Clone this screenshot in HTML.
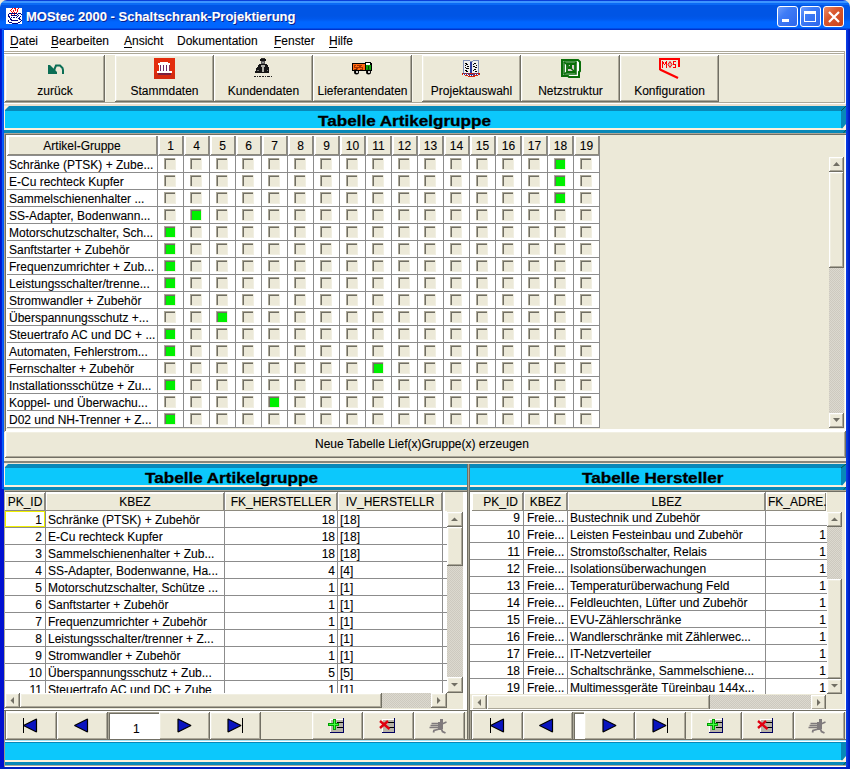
<!DOCTYPE html><html><head><meta charset="utf-8"><style>
*{margin:0;padding:0;box-sizing:border-box}
html,body{width:850px;height:769px;overflow:hidden;background:#ece9d8;position:relative;font-family:"Liberation Sans",sans-serif;font-size:12px;color:#000}
div,span{position:absolute}
.t{white-space:nowrap;line-height:14px;-webkit-text-stroke-width:0.1px}
.raised{background:#ece9d8;box-shadow:inset -1px -1px #716f64,inset 1px 1px #fff,inset -2px -2px #aca899,inset 2px 2px #f1efe2}
.hdr{background:#ece9d8;box-shadow:inset -1px -1px #8d8a7e,inset 1px 1px #fff}
.cb{width:13px;height:13px;background:#ece9d8;box-shadow:inset -1px -1px #fff,inset -2px -2px #f1efe2,inset 1px 1px #aca899,inset 2px 2px #716f64}
.cb.on::after{content:"";position:absolute;left:2px;top:2px;width:9px;height:9px;background:#00f000}
.cyan{background:#0cc8fc}
.sb{background:#ece9d8;box-shadow:inset -1px -1px #716f64,inset 1px 1px #fff,inset -2px -2px #aca899,inset 2px 2px #f1efe2}
.track{background-color:#d4d0c6;background-image:repeating-conic-gradient(#cdc9bf 0 25%, #dcd9cf 0 50%);background-size:2px 2px}
</style></head><body><div style="left:0px;top:0px;width:850px;height:30px;background:linear-gradient(to bottom,#0a3fd8 0,#0a3fd8 1px,#3d95ff 1px,#3d95ff 3px,#0a6af5 3px,#0a6af5 5px,#0055e5 5px,#0055e5 16px,#0058ec 19px,#0066ff 22px,#0066ff 28px,#0033cc 29px,#0033cc 30px);border-radius:7px 7px 0 0"></div>
<svg style="position:absolute;left:6px;top:8px" width="16" height="16" viewBox="0 0 16 16" shape-rendering="crispEdges"><rect width="16" height="16" fill="#fff"/><rect x="6" y="0" width="1" height="1" fill="#f00"/><rect x="8" y="0" width="1" height="1" fill="#f00"/><rect x="9" y="0" width="1" height="1" fill="#f00"/><rect x="12" y="0" width="1" height="1" fill="#f00"/><rect x="5" y="1" width="1" height="1" fill="#f00"/><rect x="9" y="1" width="1" height="1" fill="#f00"/><rect x="11" y="1" width="1" height="1" fill="#f00"/><rect x="4" y="2" width="1" height="1" fill="#f00"/><rect x="7" y="2" width="1" height="1" fill="#f00"/><rect x="9" y="2" width="1" height="1" fill="#f00"/><rect x="11" y="2" width="1" height="1" fill="#f00"/><rect x="5" y="3" width="1" height="1" fill="#f00"/><rect x="7" y="3" width="1" height="1" fill="#f00"/><rect x="11" y="3" width="1" height="1" fill="#f00"/><rect x="6" y="4" width="1" height="1" fill="#f00"/><rect x="8" y="4" width="1" height="1" fill="#f00"/><rect x="10" y="4" width="1" height="1" fill="#f00"/><rect x="3" y="5" width="1" height="1" fill="#000080"/><rect x="4" y="5" width="1" height="1" fill="#000080"/><rect x="5" y="5" width="1" height="1" fill="#000080"/><rect x="6" y="5" width="1" height="1" fill="#000080"/><rect x="7" y="5" width="1" height="1" fill="#000080"/><rect x="8" y="5" width="1" height="1" fill="#000080"/><rect x="9" y="5" width="1" height="1" fill="#000080"/><rect x="10" y="5" width="1" height="1" fill="#000080"/><rect x="12" y="5" width="1" height="1" fill="#000080"/><rect x="13" y="5" width="1" height="1" fill="#000080"/><rect x="14" y="5" width="1" height="1" fill="#000080"/><rect x="2" y="6" width="1" height="1" fill="#000080"/><rect x="5" y="6" width="1" height="1" fill="#f00"/><rect x="8" y="6" width="1" height="1" fill="#f00"/><rect x="11" y="6" width="1" height="1" fill="#000080"/><rect x="15" y="6" width="1" height="1" fill="#000080"/><rect x="2" y="7" width="1" height="1" fill="#000080"/><rect x="5" y="7" width="1" height="1" fill="#000080"/><rect x="6" y="7" width="1" height="1" fill="#000080"/><rect x="7" y="7" width="1" height="1" fill="#000080"/><rect x="8" y="7" width="1" height="1" fill="#000080"/><rect x="9" y="7" width="1" height="1" fill="#000080"/><rect x="10" y="7" width="1" height="1" fill="#000080"/><rect x="12" y="7" width="1" height="1" fill="#000080"/><rect x="2" y="8" width="1" height="1" fill="#000080"/><rect x="3" y="8" width="1" height="1" fill="#000080"/><rect x="11" y="8" width="1" height="1" fill="#000080"/><rect x="14" y="8" width="1" height="1" fill="#000080"/><rect x="3" y="9" width="1" height="1" fill="#000080"/><rect x="5" y="9" width="1" height="1" fill="#000080"/><rect x="7" y="9" width="1" height="1" fill="#000080"/><rect x="8" y="9" width="1" height="1" fill="#000080"/><rect x="10" y="9" width="1" height="1" fill="#000080"/><rect x="13" y="9" width="1" height="1" fill="#000080"/><rect x="4" y="10" width="1" height="1" fill="#000080"/><rect x="12" y="10" width="1" height="1" fill="#000080"/><rect x="13" y="10" width="1" height="1" fill="#000080"/><rect x="4" y="11" width="1" height="1" fill="#000080"/><rect x="5" y="11" width="1" height="1" fill="#000080"/><rect x="13" y="11" width="1" height="1" fill="#000080"/><rect x="14" y="11" width="1" height="1" fill="#000080"/><rect x="2" y="12" width="1" height="1" fill="#000080"/><rect x="5" y="12" width="1" height="1" fill="#000080"/><rect x="6" y="12" width="1" height="1" fill="#000080"/><rect x="7" y="12" width="1" height="1" fill="#000080"/><rect x="8" y="12" width="1" height="1" fill="#000080"/><rect x="9" y="12" width="1" height="1" fill="#000080"/><rect x="10" y="12" width="1" height="1" fill="#000080"/><rect x="11" y="12" width="1" height="1" fill="#000080"/><rect x="15" y="12" width="1" height="1" fill="#000080"/><rect x="2" y="13" width="1" height="1" fill="#000080"/><rect x="14" y="13" width="1" height="1" fill="#000080"/><rect x="3" y="14" width="1" height="1" fill="#000080"/><rect x="4" y="14" width="1" height="1" fill="#000080"/><rect x="5" y="14" width="1" height="1" fill="#000080"/><rect x="12" y="14" width="1" height="1" fill="#000080"/><rect x="13" y="14" width="1" height="1" fill="#000080"/><rect x="6" y="15" width="1" height="1" fill="#000080"/><rect x="7" y="15" width="1" height="1" fill="#000080"/><rect x="8" y="15" width="1" height="1" fill="#000080"/><rect x="9" y="15" width="1" height="1" fill="#000080"/><rect x="10" y="15" width="1" height="1" fill="#000080"/><rect x="11" y="15" width="1" height="1" fill="#000080"/></svg>
<span class="t" style="left:26px;top:9px;color:#fff;font-weight:bold;font-size:13px;line-height:16px;text-shadow:1px 1px #0a1e8a">MOStec 2000 - Schaltschrank-Projektierung</span>
<div style="left:777px;top:6px;width:21px;height:21px;background:linear-gradient(135deg,#6f9cfb 0,#3f7cf6 35%,#2d66ec 100%);border:1px solid #fff;border-radius:3px"><div style="left:4px;top:12px;width:7px;height:3px;background:#fff"></div></div>
<div style="left:800px;top:6px;width:21px;height:21px;background:linear-gradient(135deg,#6f9cfb 0,#3f7cf6 35%,#2d66ec 100%);border:1px solid #fff;border-radius:3px"><div style="left:3px;top:4px;width:12px;height:11px;border:1px solid #fff;border-top-width:3px"></div></div>
<div style="left:823px;top:6px;width:21px;height:21px;background:linear-gradient(135deg,#ea8a66 0,#d9582e 40%,#c8431c 100%);border:1px solid #fff;border-radius:3px"><svg style="position:absolute;left:3px;top:3px" width="14" height="14"><path d="M2 2l10 10M12 2l-10 10" stroke="#fff" stroke-width="2.2"/></svg></div>
<div style="left:0px;top:29px;width:4px;height:460px;background:linear-gradient(to right,#0010c8 0,#0020d8 2px,#0860ff 2px,#0050f0 4px)"></div>
<div style="left:0px;top:489px;width:4px;height:280px;background:#0010d0"></div>
<div style="left:846px;top:29px;width:4px;height:740px;background:linear-gradient(to right,#0a3ce6 0,#0a3ce6 1px,#0028d0 2px,#0018b8 4px)"></div>
<div style="left:0px;top:767px;width:850px;height:2px;background:#0020c0"></div>
<div style="left:4px;top:30px;width:842px;height:21px;background:#fff"></div>
<span class="t" style="left:10px;top:34px;line-height:14px">Datei</span>
<div style="left:10px;top:47px;width:8px;height:1px;background:#000"></div>
<span class="t" style="left:51px;top:34px;line-height:14px">Bearbeiten</span>
<div style="left:51px;top:47px;width:7px;height:1px;background:#000"></div>
<span class="t" style="left:124px;top:34px;line-height:14px">Ansicht</span>
<div style="left:124px;top:47px;width:8px;height:1px;background:#000"></div>
<span class="t" style="left:177px;top:34px;line-height:14px">Dokumentation</span>
<span class="t" style="left:274px;top:34px;line-height:14px">Fenster</span>
<div style="left:274px;top:47px;width:7px;height:1px;background:#000"></div>
<span class="t" style="left:329px;top:34px;line-height:14px">Hilfe</span>
<div style="left:329px;top:47px;width:8px;height:1px;background:#000"></div>
<div style="left:4px;top:51px;width:842px;height:1px;background:#aca899"></div>
<div style="left:4px;top:52px;width:842px;height:1px;background:#fff"></div>
<div style="left:4px;top:53px;width:842px;height:1px;background:#aca899"></div>
<div style="left:4px;top:54px;width:842px;height:48px;background:#ece9d8"></div>
<div style="left:4px;top:54px;width:840px;height:1px;background:#fff"></div>
<div class="raised" style="left:5px;top:55px;width:100px;height:47px;"></div>
<span class="t" style="left:5px;top:84px;width:100px;text-align:center">zurück</span>
<div class="raised" style="left:115px;top:55px;width:99px;height:47px;"></div>
<span class="t" style="left:115px;top:84px;width:99px;text-align:center">Stammdaten</span>
<div class="raised" style="left:214px;top:55px;width:99px;height:47px;"></div>
<span class="t" style="left:214px;top:84px;width:99px;text-align:center">Kundendaten</span>
<div class="raised" style="left:313px;top:55px;width:99px;height:47px;"></div>
<span class="t" style="left:313px;top:84px;width:99px;text-align:center">Lieferantendaten</span>
<div class="raised" style="left:422px;top:55px;width:99px;height:47px;"></div>
<span class="t" style="left:422px;top:84px;width:99px;text-align:center">Projektauswahl</span>
<div class="raised" style="left:521px;top:55px;width:99px;height:47px;"></div>
<span class="t" style="left:521px;top:84px;width:99px;text-align:center">Netzstruktur</span>
<div class="raised" style="left:620px;top:55px;width:99px;height:47px;"></div>
<span class="t" style="left:620px;top:84px;width:99px;text-align:center">Konfiguration</span>
<div style="left:105px;top:55px;width:10px;height:47px;background:#ece9d8;box-shadow:inset 1px 0 #f7f5ea"></div>
<div style="left:412px;top:55px;width:10px;height:47px;background:#ece9d8;box-shadow:inset 1px 0 #f7f5ea"></div>
<div style="left:844px;top:51px;width:1px;height:52px;background:#aca899"></div>
<div style="left:845px;top:51px;width:1px;height:53px;background:#fff"></div>
<div style="left:4px;top:102px;width:841px;height:1px;background:#aca899"></div>
<div style="left:4px;top:103px;width:842px;height:1px;background:#fff"></div>
<div style="left:4px;top:104px;width:842px;height:2px;background:#ebe0cf"></div>
<div style="left:4px;top:106px;width:842px;height:24px;background:#0cc8fc;border-top:5px solid #0888b8;border-right:5px solid #0888b8;border-left:1px solid #fdf0dc;border-bottom:2px solid #fdf0dc"></div>
<svg style="position:absolute;left:4px;top:106px" width="6" height="6"><path d="M0 0H5L0 5Z" fill="#fdf0dc"/></svg>
<div style="left:4px;top:130px;width:842px;height:3px;background:#0888b8"></div>
<svg style="position:absolute;left:841px;top:106px" width="5" height="27"><path d="M0 5L5 0" stroke="#0a5a48" stroke-width="1"/><path d="M5 18V24H0Z" fill="#fdf0dc"/><path d="M2.5 27L5 24" stroke="#0a5a48" stroke-width="1"/></svg>
<span class="t" style="left:318px;top:111px;font-weight:bold;font-size:15px;line-height:20px;-webkit-text-stroke:0.3px #000;transform:scaleX(1.14);transform-origin:0 0">Tabelle Artikelgruppe</span>
<div style="left:4px;top:133px;width:842px;height:299px;background:#ece9d8;box-shadow:inset 1px 1px #aca899,inset 2px 2px #716f64,inset -1px -1px #fff,inset -2px -2px #f1efe2"></div>
<div style="left:6px;top:135px;width:594px;height:293px;background:#fff"></div>
<div style="left:6px;top:429px;width:839px;height:2px;background:#fff"></div>
<div class="hdr" style="left:8px;top:136px;width:149px;height:19px;"></div>
<span class="t" style="left:7px;top:139px;width:150px;text-align:center">Artikel-Gruppe</span>
<div class="hdr" style="left:159px;top:136px;width:24px;height:19px;"></div>
<span class="t" style="left:158px;top:139px;width:25px;text-align:center">1</span>
<div class="hdr" style="left:185px;top:136px;width:24px;height:19px;"></div>
<span class="t" style="left:184px;top:139px;width:25px;text-align:center">4</span>
<div class="hdr" style="left:211px;top:136px;width:24px;height:19px;"></div>
<span class="t" style="left:210px;top:139px;width:25px;text-align:center">5</span>
<div class="hdr" style="left:237px;top:136px;width:24px;height:19px;"></div>
<span class="t" style="left:236px;top:139px;width:25px;text-align:center">6</span>
<div class="hdr" style="left:263px;top:136px;width:24px;height:19px;"></div>
<span class="t" style="left:262px;top:139px;width:25px;text-align:center">7</span>
<div class="hdr" style="left:289px;top:136px;width:24px;height:19px;"></div>
<span class="t" style="left:288px;top:139px;width:25px;text-align:center">8</span>
<div class="hdr" style="left:315px;top:136px;width:24px;height:19px;"></div>
<span class="t" style="left:314px;top:139px;width:25px;text-align:center">9</span>
<div class="hdr" style="left:341px;top:136px;width:24px;height:19px;"></div>
<span class="t" style="left:340px;top:139px;width:25px;text-align:center">10</span>
<div class="hdr" style="left:367px;top:136px;width:24px;height:19px;"></div>
<span class="t" style="left:366px;top:139px;width:25px;text-align:center">11</span>
<div class="hdr" style="left:393px;top:136px;width:24px;height:19px;"></div>
<span class="t" style="left:392px;top:139px;width:25px;text-align:center">12</span>
<div class="hdr" style="left:419px;top:136px;width:24px;height:19px;"></div>
<span class="t" style="left:418px;top:139px;width:25px;text-align:center">13</span>
<div class="hdr" style="left:445px;top:136px;width:24px;height:19px;"></div>
<span class="t" style="left:444px;top:139px;width:25px;text-align:center">14</span>
<div class="hdr" style="left:471px;top:136px;width:24px;height:19px;"></div>
<span class="t" style="left:470px;top:139px;width:25px;text-align:center">15</span>
<div class="hdr" style="left:497px;top:136px;width:24px;height:19px;"></div>
<span class="t" style="left:496px;top:139px;width:25px;text-align:center">16</span>
<div class="hdr" style="left:523px;top:136px;width:24px;height:19px;"></div>
<span class="t" style="left:522px;top:139px;width:25px;text-align:center">17</span>
<div class="hdr" style="left:549px;top:136px;width:24px;height:19px;"></div>
<span class="t" style="left:548px;top:139px;width:25px;text-align:center">18</span>
<div class="hdr" style="left:575px;top:136px;width:24px;height:19px;"></div>
<span class="t" style="left:574px;top:139px;width:25px;text-align:center">19</span>
<div style="left:157px;top:136px;width:1px;height:292px;background:#8c8c8c"></div>
<div style="left:183px;top:136px;width:1px;height:292px;background:#8c8c8c"></div>
<div style="left:209px;top:136px;width:1px;height:292px;background:#8c8c8c"></div>
<div style="left:235px;top:136px;width:1px;height:292px;background:#8c8c8c"></div>
<div style="left:261px;top:136px;width:1px;height:292px;background:#8c8c8c"></div>
<div style="left:287px;top:136px;width:1px;height:292px;background:#8c8c8c"></div>
<div style="left:313px;top:136px;width:1px;height:292px;background:#8c8c8c"></div>
<div style="left:339px;top:136px;width:1px;height:292px;background:#8c8c8c"></div>
<div style="left:365px;top:136px;width:1px;height:292px;background:#8c8c8c"></div>
<div style="left:391px;top:136px;width:1px;height:292px;background:#8c8c8c"></div>
<div style="left:417px;top:136px;width:1px;height:292px;background:#8c8c8c"></div>
<div style="left:443px;top:136px;width:1px;height:292px;background:#8c8c8c"></div>
<div style="left:469px;top:136px;width:1px;height:292px;background:#8c8c8c"></div>
<div style="left:495px;top:136px;width:1px;height:292px;background:#8c8c8c"></div>
<div style="left:521px;top:136px;width:1px;height:292px;background:#8c8c8c"></div>
<div style="left:547px;top:136px;width:1px;height:292px;background:#8c8c8c"></div>
<div style="left:573px;top:136px;width:1px;height:292px;background:#8c8c8c"></div>
<div style="left:599px;top:136px;width:1px;height:292px;background:#8c8c8c"></div>
<div style="left:6px;top:155px;width:594px;height:1px;background:#8c8c8c"></div>
<div style="left:6px;top:172px;width:594px;height:1px;background:#8c8c8c"></div>
<div style="left:6px;top:189px;width:594px;height:1px;background:#8c8c8c"></div>
<div style="left:6px;top:206px;width:594px;height:1px;background:#8c8c8c"></div>
<div style="left:6px;top:223px;width:594px;height:1px;background:#8c8c8c"></div>
<div style="left:6px;top:240px;width:594px;height:1px;background:#8c8c8c"></div>
<div style="left:6px;top:257px;width:594px;height:1px;background:#8c8c8c"></div>
<div style="left:6px;top:274px;width:594px;height:1px;background:#8c8c8c"></div>
<div style="left:6px;top:291px;width:594px;height:1px;background:#8c8c8c"></div>
<div style="left:6px;top:308px;width:594px;height:1px;background:#8c8c8c"></div>
<div style="left:6px;top:325px;width:594px;height:1px;background:#8c8c8c"></div>
<div style="left:6px;top:342px;width:594px;height:1px;background:#8c8c8c"></div>
<div style="left:6px;top:359px;width:594px;height:1px;background:#8c8c8c"></div>
<div style="left:6px;top:376px;width:594px;height:1px;background:#8c8c8c"></div>
<div style="left:6px;top:393px;width:594px;height:1px;background:#8c8c8c"></div>
<div style="left:6px;top:410px;width:594px;height:1px;background:#8c8c8c"></div>
<div style="left:6px;top:427px;width:594px;height:1px;background:#8c8c8c"></div>
<div style="left:6px;top:135px;width:1px;height:293px;background:#fff"></div>
<span class="t" style="left:9px;top:157px;line-height:16px">Schränke (PTSK) + Zube...</span>
<div class="cb" style="left:164px;top:158px;width:13px;height:13px;"></div>
<div class="cb" style="left:190px;top:158px;width:13px;height:13px;"></div>
<div class="cb" style="left:216px;top:158px;width:13px;height:13px;"></div>
<div class="cb" style="left:242px;top:158px;width:13px;height:13px;"></div>
<div class="cb" style="left:268px;top:158px;width:13px;height:13px;"></div>
<div class="cb" style="left:294px;top:158px;width:13px;height:13px;"></div>
<div class="cb" style="left:320px;top:158px;width:13px;height:13px;"></div>
<div class="cb" style="left:346px;top:158px;width:13px;height:13px;"></div>
<div class="cb" style="left:372px;top:158px;width:13px;height:13px;"></div>
<div class="cb" style="left:398px;top:158px;width:13px;height:13px;"></div>
<div class="cb" style="left:424px;top:158px;width:13px;height:13px;"></div>
<div class="cb" style="left:450px;top:158px;width:13px;height:13px;"></div>
<div class="cb" style="left:476px;top:158px;width:13px;height:13px;"></div>
<div class="cb" style="left:502px;top:158px;width:13px;height:13px;"></div>
<div class="cb" style="left:528px;top:158px;width:13px;height:13px;"></div>
<div class="cb on" style="left:554px;top:158px;width:13px;height:13px;"></div>
<div class="cb" style="left:580px;top:158px;width:13px;height:13px;"></div>
<span class="t" style="left:9px;top:174px;line-height:16px">E-Cu rechteck Kupfer</span>
<div class="cb" style="left:164px;top:175px;width:13px;height:13px;"></div>
<div class="cb" style="left:190px;top:175px;width:13px;height:13px;"></div>
<div class="cb" style="left:216px;top:175px;width:13px;height:13px;"></div>
<div class="cb" style="left:242px;top:175px;width:13px;height:13px;"></div>
<div class="cb" style="left:268px;top:175px;width:13px;height:13px;"></div>
<div class="cb" style="left:294px;top:175px;width:13px;height:13px;"></div>
<div class="cb" style="left:320px;top:175px;width:13px;height:13px;"></div>
<div class="cb" style="left:346px;top:175px;width:13px;height:13px;"></div>
<div class="cb" style="left:372px;top:175px;width:13px;height:13px;"></div>
<div class="cb" style="left:398px;top:175px;width:13px;height:13px;"></div>
<div class="cb" style="left:424px;top:175px;width:13px;height:13px;"></div>
<div class="cb" style="left:450px;top:175px;width:13px;height:13px;"></div>
<div class="cb" style="left:476px;top:175px;width:13px;height:13px;"></div>
<div class="cb" style="left:502px;top:175px;width:13px;height:13px;"></div>
<div class="cb" style="left:528px;top:175px;width:13px;height:13px;"></div>
<div class="cb on" style="left:554px;top:175px;width:13px;height:13px;"></div>
<div class="cb" style="left:580px;top:175px;width:13px;height:13px;"></div>
<span class="t" style="left:9px;top:191px;line-height:16px">Sammelschienenhalter ...</span>
<div class="cb" style="left:164px;top:192px;width:13px;height:13px;"></div>
<div class="cb" style="left:190px;top:192px;width:13px;height:13px;"></div>
<div class="cb" style="left:216px;top:192px;width:13px;height:13px;"></div>
<div class="cb" style="left:242px;top:192px;width:13px;height:13px;"></div>
<div class="cb" style="left:268px;top:192px;width:13px;height:13px;"></div>
<div class="cb" style="left:294px;top:192px;width:13px;height:13px;"></div>
<div class="cb" style="left:320px;top:192px;width:13px;height:13px;"></div>
<div class="cb" style="left:346px;top:192px;width:13px;height:13px;"></div>
<div class="cb" style="left:372px;top:192px;width:13px;height:13px;"></div>
<div class="cb" style="left:398px;top:192px;width:13px;height:13px;"></div>
<div class="cb" style="left:424px;top:192px;width:13px;height:13px;"></div>
<div class="cb" style="left:450px;top:192px;width:13px;height:13px;"></div>
<div class="cb" style="left:476px;top:192px;width:13px;height:13px;"></div>
<div class="cb" style="left:502px;top:192px;width:13px;height:13px;"></div>
<div class="cb" style="left:528px;top:192px;width:13px;height:13px;"></div>
<div class="cb on" style="left:554px;top:192px;width:13px;height:13px;"></div>
<div class="cb" style="left:580px;top:192px;width:13px;height:13px;"></div>
<span class="t" style="left:9px;top:208px;line-height:16px">SS-Adapter, Bodenwann...</span>
<div class="cb" style="left:164px;top:209px;width:13px;height:13px;"></div>
<div class="cb on" style="left:190px;top:209px;width:13px;height:13px;"></div>
<div class="cb" style="left:216px;top:209px;width:13px;height:13px;"></div>
<div class="cb" style="left:242px;top:209px;width:13px;height:13px;"></div>
<div class="cb" style="left:268px;top:209px;width:13px;height:13px;"></div>
<div class="cb" style="left:294px;top:209px;width:13px;height:13px;"></div>
<div class="cb" style="left:320px;top:209px;width:13px;height:13px;"></div>
<div class="cb" style="left:346px;top:209px;width:13px;height:13px;"></div>
<div class="cb" style="left:372px;top:209px;width:13px;height:13px;"></div>
<div class="cb" style="left:398px;top:209px;width:13px;height:13px;"></div>
<div class="cb" style="left:424px;top:209px;width:13px;height:13px;"></div>
<div class="cb" style="left:450px;top:209px;width:13px;height:13px;"></div>
<div class="cb" style="left:476px;top:209px;width:13px;height:13px;"></div>
<div class="cb" style="left:502px;top:209px;width:13px;height:13px;"></div>
<div class="cb" style="left:528px;top:209px;width:13px;height:13px;"></div>
<div class="cb" style="left:554px;top:209px;width:13px;height:13px;"></div>
<div class="cb" style="left:580px;top:209px;width:13px;height:13px;"></div>
<span class="t" style="left:9px;top:225px;line-height:16px">Motorschutzschalter, Sch...</span>
<div class="cb on" style="left:164px;top:226px;width:13px;height:13px;"></div>
<div class="cb" style="left:190px;top:226px;width:13px;height:13px;"></div>
<div class="cb" style="left:216px;top:226px;width:13px;height:13px;"></div>
<div class="cb" style="left:242px;top:226px;width:13px;height:13px;"></div>
<div class="cb" style="left:268px;top:226px;width:13px;height:13px;"></div>
<div class="cb" style="left:294px;top:226px;width:13px;height:13px;"></div>
<div class="cb" style="left:320px;top:226px;width:13px;height:13px;"></div>
<div class="cb" style="left:346px;top:226px;width:13px;height:13px;"></div>
<div class="cb" style="left:372px;top:226px;width:13px;height:13px;"></div>
<div class="cb" style="left:398px;top:226px;width:13px;height:13px;"></div>
<div class="cb" style="left:424px;top:226px;width:13px;height:13px;"></div>
<div class="cb" style="left:450px;top:226px;width:13px;height:13px;"></div>
<div class="cb" style="left:476px;top:226px;width:13px;height:13px;"></div>
<div class="cb" style="left:502px;top:226px;width:13px;height:13px;"></div>
<div class="cb" style="left:528px;top:226px;width:13px;height:13px;"></div>
<div class="cb" style="left:554px;top:226px;width:13px;height:13px;"></div>
<div class="cb" style="left:580px;top:226px;width:13px;height:13px;"></div>
<span class="t" style="left:9px;top:242px;line-height:16px">Sanftstarter + Zubehör</span>
<div class="cb on" style="left:164px;top:243px;width:13px;height:13px;"></div>
<div class="cb" style="left:190px;top:243px;width:13px;height:13px;"></div>
<div class="cb" style="left:216px;top:243px;width:13px;height:13px;"></div>
<div class="cb" style="left:242px;top:243px;width:13px;height:13px;"></div>
<div class="cb" style="left:268px;top:243px;width:13px;height:13px;"></div>
<div class="cb" style="left:294px;top:243px;width:13px;height:13px;"></div>
<div class="cb" style="left:320px;top:243px;width:13px;height:13px;"></div>
<div class="cb" style="left:346px;top:243px;width:13px;height:13px;"></div>
<div class="cb" style="left:372px;top:243px;width:13px;height:13px;"></div>
<div class="cb" style="left:398px;top:243px;width:13px;height:13px;"></div>
<div class="cb" style="left:424px;top:243px;width:13px;height:13px;"></div>
<div class="cb" style="left:450px;top:243px;width:13px;height:13px;"></div>
<div class="cb" style="left:476px;top:243px;width:13px;height:13px;"></div>
<div class="cb" style="left:502px;top:243px;width:13px;height:13px;"></div>
<div class="cb" style="left:528px;top:243px;width:13px;height:13px;"></div>
<div class="cb" style="left:554px;top:243px;width:13px;height:13px;"></div>
<div class="cb" style="left:580px;top:243px;width:13px;height:13px;"></div>
<span class="t" style="left:9px;top:259px;line-height:16px">Frequenzumrichter + Zub...</span>
<div class="cb on" style="left:164px;top:260px;width:13px;height:13px;"></div>
<div class="cb" style="left:190px;top:260px;width:13px;height:13px;"></div>
<div class="cb" style="left:216px;top:260px;width:13px;height:13px;"></div>
<div class="cb" style="left:242px;top:260px;width:13px;height:13px;"></div>
<div class="cb" style="left:268px;top:260px;width:13px;height:13px;"></div>
<div class="cb" style="left:294px;top:260px;width:13px;height:13px;"></div>
<div class="cb" style="left:320px;top:260px;width:13px;height:13px;"></div>
<div class="cb" style="left:346px;top:260px;width:13px;height:13px;"></div>
<div class="cb" style="left:372px;top:260px;width:13px;height:13px;"></div>
<div class="cb" style="left:398px;top:260px;width:13px;height:13px;"></div>
<div class="cb" style="left:424px;top:260px;width:13px;height:13px;"></div>
<div class="cb" style="left:450px;top:260px;width:13px;height:13px;"></div>
<div class="cb" style="left:476px;top:260px;width:13px;height:13px;"></div>
<div class="cb" style="left:502px;top:260px;width:13px;height:13px;"></div>
<div class="cb" style="left:528px;top:260px;width:13px;height:13px;"></div>
<div class="cb" style="left:554px;top:260px;width:13px;height:13px;"></div>
<div class="cb" style="left:580px;top:260px;width:13px;height:13px;"></div>
<span class="t" style="left:9px;top:276px;line-height:16px">Leistungsschalter/trenne...</span>
<div class="cb on" style="left:164px;top:277px;width:13px;height:13px;"></div>
<div class="cb" style="left:190px;top:277px;width:13px;height:13px;"></div>
<div class="cb" style="left:216px;top:277px;width:13px;height:13px;"></div>
<div class="cb" style="left:242px;top:277px;width:13px;height:13px;"></div>
<div class="cb" style="left:268px;top:277px;width:13px;height:13px;"></div>
<div class="cb" style="left:294px;top:277px;width:13px;height:13px;"></div>
<div class="cb" style="left:320px;top:277px;width:13px;height:13px;"></div>
<div class="cb" style="left:346px;top:277px;width:13px;height:13px;"></div>
<div class="cb" style="left:372px;top:277px;width:13px;height:13px;"></div>
<div class="cb" style="left:398px;top:277px;width:13px;height:13px;"></div>
<div class="cb" style="left:424px;top:277px;width:13px;height:13px;"></div>
<div class="cb" style="left:450px;top:277px;width:13px;height:13px;"></div>
<div class="cb" style="left:476px;top:277px;width:13px;height:13px;"></div>
<div class="cb" style="left:502px;top:277px;width:13px;height:13px;"></div>
<div class="cb" style="left:528px;top:277px;width:13px;height:13px;"></div>
<div class="cb" style="left:554px;top:277px;width:13px;height:13px;"></div>
<div class="cb" style="left:580px;top:277px;width:13px;height:13px;"></div>
<span class="t" style="left:9px;top:293px;line-height:16px">Stromwandler + Zubehör</span>
<div class="cb on" style="left:164px;top:294px;width:13px;height:13px;"></div>
<div class="cb" style="left:190px;top:294px;width:13px;height:13px;"></div>
<div class="cb" style="left:216px;top:294px;width:13px;height:13px;"></div>
<div class="cb" style="left:242px;top:294px;width:13px;height:13px;"></div>
<div class="cb" style="left:268px;top:294px;width:13px;height:13px;"></div>
<div class="cb" style="left:294px;top:294px;width:13px;height:13px;"></div>
<div class="cb" style="left:320px;top:294px;width:13px;height:13px;"></div>
<div class="cb" style="left:346px;top:294px;width:13px;height:13px;"></div>
<div class="cb" style="left:372px;top:294px;width:13px;height:13px;"></div>
<div class="cb" style="left:398px;top:294px;width:13px;height:13px;"></div>
<div class="cb" style="left:424px;top:294px;width:13px;height:13px;"></div>
<div class="cb" style="left:450px;top:294px;width:13px;height:13px;"></div>
<div class="cb" style="left:476px;top:294px;width:13px;height:13px;"></div>
<div class="cb" style="left:502px;top:294px;width:13px;height:13px;"></div>
<div class="cb" style="left:528px;top:294px;width:13px;height:13px;"></div>
<div class="cb" style="left:554px;top:294px;width:13px;height:13px;"></div>
<div class="cb" style="left:580px;top:294px;width:13px;height:13px;"></div>
<span class="t" style="left:9px;top:310px;line-height:16px">Überspannungsschutz +...</span>
<div class="cb" style="left:164px;top:311px;width:13px;height:13px;"></div>
<div class="cb" style="left:190px;top:311px;width:13px;height:13px;"></div>
<div class="cb on" style="left:216px;top:311px;width:13px;height:13px;"></div>
<div class="cb" style="left:242px;top:311px;width:13px;height:13px;"></div>
<div class="cb" style="left:268px;top:311px;width:13px;height:13px;"></div>
<div class="cb" style="left:294px;top:311px;width:13px;height:13px;"></div>
<div class="cb" style="left:320px;top:311px;width:13px;height:13px;"></div>
<div class="cb" style="left:346px;top:311px;width:13px;height:13px;"></div>
<div class="cb" style="left:372px;top:311px;width:13px;height:13px;"></div>
<div class="cb" style="left:398px;top:311px;width:13px;height:13px;"></div>
<div class="cb" style="left:424px;top:311px;width:13px;height:13px;"></div>
<div class="cb" style="left:450px;top:311px;width:13px;height:13px;"></div>
<div class="cb" style="left:476px;top:311px;width:13px;height:13px;"></div>
<div class="cb" style="left:502px;top:311px;width:13px;height:13px;"></div>
<div class="cb" style="left:528px;top:311px;width:13px;height:13px;"></div>
<div class="cb" style="left:554px;top:311px;width:13px;height:13px;"></div>
<div class="cb" style="left:580px;top:311px;width:13px;height:13px;"></div>
<span class="t" style="left:9px;top:327px;line-height:16px">Steuertrafo AC und DC + ...</span>
<div class="cb on" style="left:164px;top:328px;width:13px;height:13px;"></div>
<div class="cb" style="left:190px;top:328px;width:13px;height:13px;"></div>
<div class="cb" style="left:216px;top:328px;width:13px;height:13px;"></div>
<div class="cb" style="left:242px;top:328px;width:13px;height:13px;"></div>
<div class="cb" style="left:268px;top:328px;width:13px;height:13px;"></div>
<div class="cb" style="left:294px;top:328px;width:13px;height:13px;"></div>
<div class="cb" style="left:320px;top:328px;width:13px;height:13px;"></div>
<div class="cb" style="left:346px;top:328px;width:13px;height:13px;"></div>
<div class="cb" style="left:372px;top:328px;width:13px;height:13px;"></div>
<div class="cb" style="left:398px;top:328px;width:13px;height:13px;"></div>
<div class="cb" style="left:424px;top:328px;width:13px;height:13px;"></div>
<div class="cb" style="left:450px;top:328px;width:13px;height:13px;"></div>
<div class="cb" style="left:476px;top:328px;width:13px;height:13px;"></div>
<div class="cb" style="left:502px;top:328px;width:13px;height:13px;"></div>
<div class="cb" style="left:528px;top:328px;width:13px;height:13px;"></div>
<div class="cb" style="left:554px;top:328px;width:13px;height:13px;"></div>
<div class="cb" style="left:580px;top:328px;width:13px;height:13px;"></div>
<span class="t" style="left:9px;top:344px;line-height:16px">Automaten, Fehlerstrom...</span>
<div class="cb on" style="left:164px;top:345px;width:13px;height:13px;"></div>
<div class="cb" style="left:190px;top:345px;width:13px;height:13px;"></div>
<div class="cb" style="left:216px;top:345px;width:13px;height:13px;"></div>
<div class="cb" style="left:242px;top:345px;width:13px;height:13px;"></div>
<div class="cb" style="left:268px;top:345px;width:13px;height:13px;"></div>
<div class="cb" style="left:294px;top:345px;width:13px;height:13px;"></div>
<div class="cb" style="left:320px;top:345px;width:13px;height:13px;"></div>
<div class="cb" style="left:346px;top:345px;width:13px;height:13px;"></div>
<div class="cb" style="left:372px;top:345px;width:13px;height:13px;"></div>
<div class="cb" style="left:398px;top:345px;width:13px;height:13px;"></div>
<div class="cb" style="left:424px;top:345px;width:13px;height:13px;"></div>
<div class="cb" style="left:450px;top:345px;width:13px;height:13px;"></div>
<div class="cb" style="left:476px;top:345px;width:13px;height:13px;"></div>
<div class="cb" style="left:502px;top:345px;width:13px;height:13px;"></div>
<div class="cb" style="left:528px;top:345px;width:13px;height:13px;"></div>
<div class="cb" style="left:554px;top:345px;width:13px;height:13px;"></div>
<div class="cb" style="left:580px;top:345px;width:13px;height:13px;"></div>
<span class="t" style="left:9px;top:361px;line-height:16px">Fernschalter + Zubehör</span>
<div class="cb" style="left:164px;top:362px;width:13px;height:13px;"></div>
<div class="cb" style="left:190px;top:362px;width:13px;height:13px;"></div>
<div class="cb" style="left:216px;top:362px;width:13px;height:13px;"></div>
<div class="cb" style="left:242px;top:362px;width:13px;height:13px;"></div>
<div class="cb" style="left:268px;top:362px;width:13px;height:13px;"></div>
<div class="cb" style="left:294px;top:362px;width:13px;height:13px;"></div>
<div class="cb" style="left:320px;top:362px;width:13px;height:13px;"></div>
<div class="cb" style="left:346px;top:362px;width:13px;height:13px;"></div>
<div class="cb on" style="left:372px;top:362px;width:13px;height:13px;"></div>
<div class="cb" style="left:398px;top:362px;width:13px;height:13px;"></div>
<div class="cb" style="left:424px;top:362px;width:13px;height:13px;"></div>
<div class="cb" style="left:450px;top:362px;width:13px;height:13px;"></div>
<div class="cb" style="left:476px;top:362px;width:13px;height:13px;"></div>
<div class="cb" style="left:502px;top:362px;width:13px;height:13px;"></div>
<div class="cb" style="left:528px;top:362px;width:13px;height:13px;"></div>
<div class="cb" style="left:554px;top:362px;width:13px;height:13px;"></div>
<div class="cb" style="left:580px;top:362px;width:13px;height:13px;"></div>
<span class="t" style="left:9px;top:378px;line-height:16px">Installationsschütze + Zu...</span>
<div class="cb on" style="left:164px;top:379px;width:13px;height:13px;"></div>
<div class="cb" style="left:190px;top:379px;width:13px;height:13px;"></div>
<div class="cb" style="left:216px;top:379px;width:13px;height:13px;"></div>
<div class="cb" style="left:242px;top:379px;width:13px;height:13px;"></div>
<div class="cb" style="left:268px;top:379px;width:13px;height:13px;"></div>
<div class="cb" style="left:294px;top:379px;width:13px;height:13px;"></div>
<div class="cb" style="left:320px;top:379px;width:13px;height:13px;"></div>
<div class="cb" style="left:346px;top:379px;width:13px;height:13px;"></div>
<div class="cb" style="left:372px;top:379px;width:13px;height:13px;"></div>
<div class="cb" style="left:398px;top:379px;width:13px;height:13px;"></div>
<div class="cb" style="left:424px;top:379px;width:13px;height:13px;"></div>
<div class="cb" style="left:450px;top:379px;width:13px;height:13px;"></div>
<div class="cb" style="left:476px;top:379px;width:13px;height:13px;"></div>
<div class="cb" style="left:502px;top:379px;width:13px;height:13px;"></div>
<div class="cb" style="left:528px;top:379px;width:13px;height:13px;"></div>
<div class="cb" style="left:554px;top:379px;width:13px;height:13px;"></div>
<div class="cb" style="left:580px;top:379px;width:13px;height:13px;"></div>
<span class="t" style="left:9px;top:395px;line-height:16px">Koppel- und Überwachu...</span>
<div class="cb" style="left:164px;top:396px;width:13px;height:13px;"></div>
<div class="cb" style="left:190px;top:396px;width:13px;height:13px;"></div>
<div class="cb" style="left:216px;top:396px;width:13px;height:13px;"></div>
<div class="cb" style="left:242px;top:396px;width:13px;height:13px;"></div>
<div class="cb on" style="left:268px;top:396px;width:13px;height:13px;"></div>
<div class="cb" style="left:294px;top:396px;width:13px;height:13px;"></div>
<div class="cb" style="left:320px;top:396px;width:13px;height:13px;"></div>
<div class="cb" style="left:346px;top:396px;width:13px;height:13px;"></div>
<div class="cb" style="left:372px;top:396px;width:13px;height:13px;"></div>
<div class="cb" style="left:398px;top:396px;width:13px;height:13px;"></div>
<div class="cb" style="left:424px;top:396px;width:13px;height:13px;"></div>
<div class="cb" style="left:450px;top:396px;width:13px;height:13px;"></div>
<div class="cb" style="left:476px;top:396px;width:13px;height:13px;"></div>
<div class="cb" style="left:502px;top:396px;width:13px;height:13px;"></div>
<div class="cb" style="left:528px;top:396px;width:13px;height:13px;"></div>
<div class="cb" style="left:554px;top:396px;width:13px;height:13px;"></div>
<div class="cb" style="left:580px;top:396px;width:13px;height:13px;"></div>
<span class="t" style="left:9px;top:412px;line-height:16px">D02 und NH-Trenner + Z...</span>
<div class="cb on" style="left:164px;top:413px;width:13px;height:13px;"></div>
<div class="cb" style="left:190px;top:413px;width:13px;height:13px;"></div>
<div class="cb" style="left:216px;top:413px;width:13px;height:13px;"></div>
<div class="cb" style="left:242px;top:413px;width:13px;height:13px;"></div>
<div class="cb" style="left:268px;top:413px;width:13px;height:13px;"></div>
<div class="cb" style="left:294px;top:413px;width:13px;height:13px;"></div>
<div class="cb" style="left:320px;top:413px;width:13px;height:13px;"></div>
<div class="cb" style="left:346px;top:413px;width:13px;height:13px;"></div>
<div class="cb" style="left:372px;top:413px;width:13px;height:13px;"></div>
<div class="cb" style="left:398px;top:413px;width:13px;height:13px;"></div>
<div class="cb" style="left:424px;top:413px;width:13px;height:13px;"></div>
<div class="cb" style="left:450px;top:413px;width:13px;height:13px;"></div>
<div class="cb" style="left:476px;top:413px;width:13px;height:13px;"></div>
<div class="cb" style="left:502px;top:413px;width:13px;height:13px;"></div>
<div class="cb" style="left:528px;top:413px;width:13px;height:13px;"></div>
<div class="cb" style="left:554px;top:413px;width:13px;height:13px;"></div>
<div class="cb" style="left:580px;top:413px;width:13px;height:13px;"></div>
<div class="sb" style="left:829px;top:157px;width:15px;height:15px;"></div>
<svg style="position:absolute;left:833px;top:162px" width="7" height="5"><path d="M0 4H7L3.5 0Z" fill="#716f64"/></svg>
<div class="sb" style="left:829px;top:172px;width:15px;height:96px;"></div>
<div class="track" style="left:829px;top:268px;width:15px;height:145px;"></div>
<div class="sb" style="left:829px;top:413px;width:15px;height:15px;"></div>
<svg style="position:absolute;left:833px;top:418px" width="7" height="5"><path d="M0 0H7L3.5 4Z" fill="#716f64"/></svg>
<div class="raised" style="left:5px;top:431px;width:841px;height:27px;"></div>
<span class="t" style="left:315px;top:437px;line-height:14px">Neue Tabelle Lief(x)Gruppe(x) erzeugen</span>
<div style="left:4px;top:458px;width:842px;height:3px;background:#f3eedc"></div>
<div style="left:4px;top:461px;width:842px;height:2px;background:#8a877a"></div>
<div style="left:4px;top:464px;width:463px;height:23px;background:#0cc8fc;border-top:4px solid #0888b8;border-left:1px solid #fdf0dc;border-bottom:2px solid #fdf0dc"></div>
<svg style="position:absolute;left:4px;top:464px" width="6" height="6"><path d="M0 0H4L0 4Z" fill="#fdf0dc"/></svg>
<div style="left:4px;top:487px;width:463px;height:3px;background:#0888b8"></div>
<span class="t" style="left:145px;top:468px;font-weight:bold;font-size:15px;line-height:20px;-webkit-text-stroke:0.3px #000;transform:scaleX(1.14);transform-origin:0 0">Tabelle Artikelgruppe</span>
<div style="left:470px;top:464px;width:376px;height:23px;background:#0cc8fc;border-top:4px solid #0888b8;border-right:5px solid #0888b8;border-bottom:2px solid #fdf0dc"></div>
<div style="left:470px;top:487px;width:376px;height:3px;background:#0888b8"></div>
<svg style="position:absolute;left:841px;top:464px" width="5" height="26"><path d="M0 4L5 0" stroke="#0a5a48" stroke-width="1"/><path d="M5 17V23H0Z" fill="#fdf0dc"/><path d="M2.5 26L5 23" stroke="#0a5a48" stroke-width="1"/></svg>
<span class="t" style="left:582px;top:468px;font-weight:bold;font-size:15px;line-height:20px;-webkit-text-stroke:0.3px #000;transform:scaleX(1.14);transform-origin:0 0">Tabelle Hersteller</span>
<div style="left:467px;top:464px;width:3px;height:276px;background:linear-gradient(to right,#716f64 0,#716f64 1px,#aca899 1px,#aca899 2px,#716f64 2px)"></div>
<div style="left:4px;top:490px;width:463px;height:220px;background:#ece9d8;box-shadow:inset 1px 1px #aca899,inset 0 2px #716f64,inset -1px -1px #fff"></div>
<div style="left:5px;top:492px;width:438px;height:201px;background:#fff"></div>
<div style="left:5px;top:492px;width:442px;height:201px;overflow:hidden;background:#fff">
<div class="hdr" style="left:0px;top:1px;width:40px;height:18px"></div>
<span class="t" style="left:0px;top:3px;width:40px;text-align:center">PK_ID</span>
<div class="hdr" style="left:41px;top:1px;width:178px;height:18px"></div>
<span class="t" style="left:41px;top:3px;width:178px;text-align:center">KBEZ</span>
<div class="hdr" style="left:220px;top:1px;width:112px;height:18px"></div>
<span class="t" style="left:220px;top:3px;width:112px;text-align:center">FK_HERSTELLER</span>
<div class="hdr" style="left:333px;top:1px;width:104px;height:18px"></div>
<span class="t" style="left:333px;top:3px;width:104px;text-align:center">IV_HERSTELLR</span>
<div style="left:40px;top:0;width:1px;height:201px;background:#8c8c8c"></div>
<div style="left:219px;top:0;width:1px;height:201px;background:#8c8c8c"></div>
<div style="left:332px;top:0;width:1px;height:201px;background:#8c8c8c"></div>
<div style="left:437px;top:0;width:1px;height:201px;background:#8c8c8c"></div>
<div style="left:0;top:35px;width:442px;height:1px;background:#8c8c8c"></div>
<span class="t" style="left:0;top:20px;width:37px;text-align:right;line-height:16px">1</span>
<span class="t" style="left:43px;top:20px;line-height:16px">Schränke (PTSK) + Zubehör</span>
<span class="t" style="left:221px;top:20px;width:109px;text-align:right;line-height:16px">18</span>
<span class="t" style="left:335px;top:20px;line-height:16px">[18]</span>
<div style="left:0;top:52px;width:442px;height:1px;background:#8c8c8c"></div>
<span class="t" style="left:0;top:37px;width:37px;text-align:right;line-height:16px">2</span>
<span class="t" style="left:43px;top:37px;line-height:16px">E-Cu rechteck Kupfer</span>
<span class="t" style="left:221px;top:37px;width:109px;text-align:right;line-height:16px">18</span>
<span class="t" style="left:335px;top:37px;line-height:16px">[18]</span>
<div style="left:0;top:69px;width:442px;height:1px;background:#8c8c8c"></div>
<span class="t" style="left:0;top:54px;width:37px;text-align:right;line-height:16px">3</span>
<span class="t" style="left:43px;top:54px;line-height:16px">Sammelschienenhalter + Zub...</span>
<span class="t" style="left:221px;top:54px;width:109px;text-align:right;line-height:16px">18</span>
<span class="t" style="left:335px;top:54px;line-height:16px">[18]</span>
<div style="left:0;top:86px;width:442px;height:1px;background:#8c8c8c"></div>
<span class="t" style="left:0;top:71px;width:37px;text-align:right;line-height:16px">4</span>
<span class="t" style="left:43px;top:71px;line-height:16px">SS-Adapter, Bodenwanne, Ha...</span>
<span class="t" style="left:221px;top:71px;width:109px;text-align:right;line-height:16px">4</span>
<span class="t" style="left:335px;top:71px;line-height:16px">[4]</span>
<div style="left:0;top:103px;width:442px;height:1px;background:#8c8c8c"></div>
<span class="t" style="left:0;top:88px;width:37px;text-align:right;line-height:16px">5</span>
<span class="t" style="left:43px;top:88px;line-height:16px">Motorschutzschalter, Schütze ...</span>
<span class="t" style="left:221px;top:88px;width:109px;text-align:right;line-height:16px">1</span>
<span class="t" style="left:335px;top:88px;line-height:16px">[1]</span>
<div style="left:0;top:120px;width:442px;height:1px;background:#8c8c8c"></div>
<span class="t" style="left:0;top:105px;width:37px;text-align:right;line-height:16px">6</span>
<span class="t" style="left:43px;top:105px;line-height:16px">Sanftstarter + Zubehör</span>
<span class="t" style="left:221px;top:105px;width:109px;text-align:right;line-height:16px">1</span>
<span class="t" style="left:335px;top:105px;line-height:16px">[1]</span>
<div style="left:0;top:137px;width:442px;height:1px;background:#8c8c8c"></div>
<span class="t" style="left:0;top:122px;width:37px;text-align:right;line-height:16px">7</span>
<span class="t" style="left:43px;top:122px;line-height:16px">Frequenzumrichter + Zubehör</span>
<span class="t" style="left:221px;top:122px;width:109px;text-align:right;line-height:16px">1</span>
<span class="t" style="left:335px;top:122px;line-height:16px">[1]</span>
<div style="left:0;top:154px;width:442px;height:1px;background:#8c8c8c"></div>
<span class="t" style="left:0;top:139px;width:37px;text-align:right;line-height:16px">8</span>
<span class="t" style="left:43px;top:139px;line-height:16px">Leistungsschalter/trenner + Z...</span>
<span class="t" style="left:221px;top:139px;width:109px;text-align:right;line-height:16px">1</span>
<span class="t" style="left:335px;top:139px;line-height:16px">[1]</span>
<div style="left:0;top:171px;width:442px;height:1px;background:#8c8c8c"></div>
<span class="t" style="left:0;top:156px;width:37px;text-align:right;line-height:16px">9</span>
<span class="t" style="left:43px;top:156px;line-height:16px">Stromwandler + Zubehör</span>
<span class="t" style="left:221px;top:156px;width:109px;text-align:right;line-height:16px">1</span>
<span class="t" style="left:335px;top:156px;line-height:16px">[1]</span>
<div style="left:0;top:188px;width:442px;height:1px;background:#8c8c8c"></div>
<span class="t" style="left:0;top:173px;width:37px;text-align:right;line-height:16px">10</span>
<span class="t" style="left:43px;top:173px;line-height:16px">Überspannungsschutz + Zub...</span>
<span class="t" style="left:221px;top:173px;width:109px;text-align:right;line-height:16px">5</span>
<span class="t" style="left:335px;top:173px;line-height:16px">[5]</span>
<div style="left:0;top:205px;width:442px;height:1px;background:#8c8c8c"></div>
<span class="t" style="left:0;top:190px;width:37px;text-align:right;line-height:16px">11</span>
<span class="t" style="left:43px;top:190px;line-height:16px">Steuertrafo AC und DC + Zube</span>
<span class="t" style="left:221px;top:190px;width:109px;text-align:right;line-height:16px">1</span>
<span class="t" style="left:335px;top:190px;line-height:16px">[1]</span>
<div style="left:0;top:19px;width:40px;height:16px;border:1px solid #f0f000"></div>
</div>
<div style="left:445px;top:492px;width:18px;height:19px;background:#ece9d8"></div>
<div style="left:463px;top:492px;width:4px;height:217px;background:#fff"></div>
<div class="sb" style="left:447px;top:512px;width:16px;height:15px;"></div>
<div class="sb" style="left:447px;top:527px;width:16px;height:39px;"></div>
<div class="track" style="left:447px;top:566px;width:16px;height:111px;"></div>
<div class="sb" style="left:447px;top:677px;width:16px;height:16px;"></div>
<div class="sb" style="left:5px;top:693px;width:15px;height:15px;"></div>
<div class="sb" style="left:20px;top:693px;width:362px;height:15px;"></div>
<div class="track" style="left:382px;top:693px;width:49px;height:15px;"></div>
<div class="sb" style="left:431px;top:693px;width:16px;height:15px;"></div>
<div style="left:470px;top:490px;width:376px;height:222px;background:#ece9d8;box-shadow:inset 0 1px #aca899,inset 0 2px #716f64,inset -1px -1px #fff"></div>
<div style="left:470px;top:492px;width:357px;height:202px;background:#fff"></div>
<div style="left:470px;top:492px;width:357px;height:202px;overflow:hidden;background:#fff">
<div style="left:0;top:33px;width:357px;height:1px;background:#8c8c8c"></div>
<span class="t" style="left:0;top:18px;width:50px;text-align:right;line-height:16px">9</span>
<span class="t" style="left:57px;top:18px;line-height:16px">Freie...</span>
<span class="t" style="left:100px;top:18px;line-height:16px">Bustechnik und Zubehör</span>
<span class="t" style="left:296px;top:18px;width:60px;text-align:right;line-height:16px"></span>
<div style="left:0;top:50px;width:357px;height:1px;background:#8c8c8c"></div>
<span class="t" style="left:0;top:35px;width:50px;text-align:right;line-height:16px">10</span>
<span class="t" style="left:57px;top:35px;line-height:16px">Freie...</span>
<span class="t" style="left:100px;top:35px;line-height:16px">Leisten Festeinbau und Zubehör</span>
<span class="t" style="left:296px;top:35px;width:60px;text-align:right;line-height:16px">1</span>
<div style="left:0;top:67px;width:357px;height:1px;background:#8c8c8c"></div>
<span class="t" style="left:0;top:52px;width:50px;text-align:right;line-height:16px">11</span>
<span class="t" style="left:57px;top:52px;line-height:16px">Freie...</span>
<span class="t" style="left:100px;top:52px;line-height:16px">Stromstoßschalter, Relais</span>
<span class="t" style="left:296px;top:52px;width:60px;text-align:right;line-height:16px">1</span>
<div style="left:0;top:84px;width:357px;height:1px;background:#8c8c8c"></div>
<span class="t" style="left:0;top:69px;width:50px;text-align:right;line-height:16px">12</span>
<span class="t" style="left:57px;top:69px;line-height:16px">Freie...</span>
<span class="t" style="left:100px;top:69px;line-height:16px">Isolationsüberwachungen</span>
<span class="t" style="left:296px;top:69px;width:60px;text-align:right;line-height:16px">1</span>
<div style="left:0;top:101px;width:357px;height:1px;background:#8c8c8c"></div>
<span class="t" style="left:0;top:86px;width:50px;text-align:right;line-height:16px">13</span>
<span class="t" style="left:57px;top:86px;line-height:16px">Freie...</span>
<span class="t" style="left:100px;top:86px;line-height:16px">Temperaturüberwachung Feld</span>
<span class="t" style="left:296px;top:86px;width:60px;text-align:right;line-height:16px">1</span>
<div style="left:0;top:118px;width:357px;height:1px;background:#8c8c8c"></div>
<span class="t" style="left:0;top:103px;width:50px;text-align:right;line-height:16px">14</span>
<span class="t" style="left:57px;top:103px;line-height:16px">Freie...</span>
<span class="t" style="left:100px;top:103px;line-height:16px">Feldleuchten, Lüfter und Zubehör</span>
<span class="t" style="left:296px;top:103px;width:60px;text-align:right;line-height:16px">1</span>
<div style="left:0;top:135px;width:357px;height:1px;background:#8c8c8c"></div>
<span class="t" style="left:0;top:120px;width:50px;text-align:right;line-height:16px">15</span>
<span class="t" style="left:57px;top:120px;line-height:16px">Freie...</span>
<span class="t" style="left:100px;top:120px;line-height:16px">EVU-Zählerschränke</span>
<span class="t" style="left:296px;top:120px;width:60px;text-align:right;line-height:16px">1</span>
<div style="left:0;top:152px;width:357px;height:1px;background:#8c8c8c"></div>
<span class="t" style="left:0;top:137px;width:50px;text-align:right;line-height:16px">16</span>
<span class="t" style="left:57px;top:137px;line-height:16px">Freie...</span>
<span class="t" style="left:100px;top:137px;line-height:16px">Wandlerschränke mit Zählerwec...</span>
<span class="t" style="left:296px;top:137px;width:60px;text-align:right;line-height:16px">1</span>
<div style="left:0;top:169px;width:357px;height:1px;background:#8c8c8c"></div>
<span class="t" style="left:0;top:154px;width:50px;text-align:right;line-height:16px">17</span>
<span class="t" style="left:57px;top:154px;line-height:16px">Freie...</span>
<span class="t" style="left:100px;top:154px;line-height:16px">IT-Netzverteiler</span>
<span class="t" style="left:296px;top:154px;width:60px;text-align:right;line-height:16px">1</span>
<div style="left:0;top:186px;width:357px;height:1px;background:#8c8c8c"></div>
<span class="t" style="left:0;top:171px;width:50px;text-align:right;line-height:16px">18</span>
<span class="t" style="left:57px;top:171px;line-height:16px">Freie...</span>
<span class="t" style="left:100px;top:171px;line-height:16px">Schaltschränke, Sammelschiene...</span>
<span class="t" style="left:296px;top:171px;width:60px;text-align:right;line-height:16px">1</span>
<div style="left:0;top:203px;width:357px;height:1px;background:#8c8c8c"></div>
<span class="t" style="left:0;top:188px;width:50px;text-align:right;line-height:16px">19</span>
<span class="t" style="left:57px;top:188px;line-height:16px">Freie...</span>
<span class="t" style="left:100px;top:188px;line-height:16px">Multimessgeräte Türeinbau 144x...</span>
<span class="t" style="left:296px;top:188px;width:60px;text-align:right;line-height:16px">1</span>
<div style="left:53px;top:0;width:1px;height:202px;background:#8c8c8c"></div>
<div style="left:97px;top:0;width:1px;height:202px;background:#8c8c8c"></div>
<div style="left:295px;top:0;width:1px;height:202px;background:#8c8c8c"></div>
<div class="hdr" style="left:2px;top:1px;width:51px;height:18px"></div>
<span class="t" style="left:2px;top:3px;width:51px;text-align:right;padding-right:5px">PK_ID</span>
<div class="hdr" style="left:54px;top:1px;width:43px;height:18px"></div>
<span class="t" style="left:54px;top:3px;width:43px;text-align:center">KBEZ</span>
<div class="hdr" style="left:98px;top:1px;width:197px;height:18px"></div>
<span class="t" style="left:98px;top:3px;width:197px;text-align:center">LBEZ</span>
<div class="hdr" style="left:296px;top:1px;width:60px;height:18px"></div>
<span class="t" style="left:296px;top:3px;width:60px;text-align:left;padding-left:2px">FK_ADRE.</span>
</div>
<div style="left:827px;top:492px;width:15px;height:20px;background:#ece9d8"></div>
<div class="sb" style="left:827px;top:512px;width:15px;height:15px;"></div>
<div class="track" style="left:827px;top:527px;width:15px;height:52px;"></div>
<div class="sb" style="left:827px;top:579px;width:15px;height:100px;"></div>
<div class="sb" style="left:827px;top:679px;width:15px;height:15px;"></div>
<div class="sb" style="left:472px;top:695px;width:15px;height:15px;"></div>
<div class="track" style="left:487px;top:695px;width:324px;height:15px;"></div>
<div class="sb" style="left:487px;top:695px;width:223px;height:15px;"></div>
<div class="sb" style="left:811px;top:695px;width:15px;height:15px;"></div>
<div style="left:4px;top:709px;width:463px;height:1px;background:#fff"></div>
<div style="left:4px;top:710px;width:463px;height:29px;background:#ece9d8;box-shadow:inset 0 1px #716f64,inset 1px 0 #aca899,inset 2px 0 #716f64"></div>
<div style="left:6px;top:711px;width:461px;height:1px;background:#fff"></div>
<div class="raised" style="left:6px;top:712px;width:51px;height:28px;"></div>
<div class="raised" style="left:57px;top:712px;width:51px;height:28px;"></div>
<div style="left:108px;top:712px;width:51px;height:28px;background:#fff;box-shadow:inset 1px 1px #aca899,inset 2px 2px #716f64"></div>
<div class="raised" style="left:159px;top:712px;width:51px;height:28px;"></div>
<div class="raised" style="left:210px;top:712px;width:51px;height:28px;"></div>
<div style="left:261px;top:712px;width:51px;height:28px;background:#ece9d8"></div>
<div class="raised" style="left:312px;top:712px;width:51px;height:28px;"></div>
<div class="raised" style="left:363px;top:712px;width:51px;height:28px;"></div>
<div class="raised" style="left:414px;top:712px;width:51px;height:28px;"></div>
<span class="t" style="left:133px;top:722px;line-height:14px">1</span>
<div style="left:470px;top:709px;width:376px;height:1px;background:#fff"></div>
<div style="left:470px;top:710px;width:376px;height:29px;background:#ece9d8;box-shadow:inset 0 1px #716f64,inset 1px 0 #aca899,inset 2px 0 #716f64"></div>
<div style="left:472px;top:711px;width:374px;height:1px;background:#fff"></div>
<div class="raised" style="left:472px;top:712px;width:51px;height:28px;"></div>
<div class="raised" style="left:523px;top:712px;width:50px;height:28px;"></div>
<div style="left:573px;top:712px;width:11px;height:28px;background:#fff;box-shadow:inset 1px 1px #aca899,inset 2px 2px #716f64"></div>
<div class="raised" style="left:584px;top:712px;width:51px;height:28px;"></div>
<div class="raised" style="left:635px;top:712px;width:51px;height:28px;"></div>
<div class="raised" style="left:691px;top:712px;width:51px;height:28px;"></div>
<div class="raised" style="left:742px;top:712px;width:52px;height:28px;"></div>
<div class="raised" style="left:794px;top:712px;width:51px;height:28px;"></div>
<div style="left:4px;top:739px;width:842px;height:1px;background:#716f64"></div>
<div style="left:4px;top:740px;width:842px;height:1px;background:#9fe4f8"></div>
<div style="left:4px;top:741px;width:842px;height:1px;background:#fff"></div>
<div style="left:4px;top:742px;width:842px;height:20px;background:#0cc8fc;border-right:5px solid #0888b8;border-bottom:2px solid #fdf0dc;border-top:1px solid #0888b8"></div>
<div style="left:4px;top:762px;width:842px;height:3px;background:#0888b8"></div>
<svg style="position:absolute;left:841px;top:742px" width="5" height="23"><path d="M5 14V20H0Z" fill="#fdf0dc"/><path d="M2.5 23L5 20" stroke="#0a5a48" stroke-width="1"/></svg>
<div style="left:4px;top:765px;width:842px;height:1px;background:#aca899"></div>
<div style="left:4px;top:766px;width:842px;height:1px;background:#fff"></div>
<div style="left:4px;top:739px;width:1px;height:28px;background:#9a9688"></div>
<svg style="position:absolute;left:451px;top:517px" width="7" height="4"><path d="M0 4H7L3.5 0.5Z" fill="#716f64"/></svg>
<svg style="position:absolute;left:451px;top:683px" width="7" height="4"><path d="M0 0H7L3.5 3.5Z" fill="#716f64"/></svg>
<svg style="position:absolute;left:10px;top:697px" width="4" height="7"><path d="M4 0V7L0.5 3.5Z" fill="#716f64"/></svg>
<svg style="position:absolute;left:437px;top:697px" width="4" height="7"><path d="M0 0V7L3.5 3.5Z" fill="#716f64"/></svg>
<svg style="position:absolute;left:831px;top:517px" width="7" height="4"><path d="M0 4H7L3.5 0.5Z" fill="#716f64"/></svg>
<svg style="position:absolute;left:831px;top:684px" width="7" height="4"><path d="M0 0H7L3.5 3.5Z" fill="#716f64"/></svg>
<svg style="position:absolute;left:477px;top:699px" width="4" height="7"><path d="M4 0V7L0.5 3.5Z" fill="#716f64"/></svg>
<svg style="position:absolute;left:817px;top:699px" width="4" height="7"><path d="M0 0V7L3.5 3.5Z" fill="#716f64"/></svg>
<svg style="position:absolute;left:40px;top:55px" width="40" height="25" viewBox="0 0 40 25" shape-rendering="crispEdges"><path d="M8 10H10L17 17V19H8Z" fill="#0b6e55" shape-rendering="auto"/><path d="M14.5 15.5V14L16 10.5H20L22.5 13L23 15V19" stroke="#0b6e55" stroke-width="2" fill="none" shape-rendering="auto"/></svg><svg style="position:absolute;left:154px;top:58px" width="21" height="21" viewBox="0 0 21 21" shape-rendering="crispEdges"><rect x="0" y="0" width="21" height="21" fill="#e32d0e"/><rect x="0" y="15" width="21" height="6" fill="#d42a10"/><path d="M4 5H16V7H4Z" fill="#fff"/><path d="M6 4H14V5H6Z" fill="#fff"/><rect x="5" y="7" width="11" height="6" fill="#fff"/><rect x="6" y="7" width="1" height="6" fill="#6a2a6a"/><rect x="9" y="7" width="1" height="6" fill="#6a2a6a"/><rect x="12" y="7" width="1" height="6" fill="#6a2a6a"/><rect x="15" y="7" width="1" height="6" fill="#8a3a5a"/><rect x="3" y="13" width="15" height="2" fill="#fff"/><rect x="4" y="15" width="13" height="2" fill="#7a2040"/></svg><svg style="position:absolute;left:253px;top:58px" width="20" height="20" viewBox="0 0 20 20" shape-rendering="crispEdges"><rect x="8" y="0" width="4" height="1" fill="#333"/><rect x="7" y="1" width="6" height="2" fill="#111"/><rect x="8" y="3" width="4" height="3" fill="#555"/><rect x="9" y="4" width="2" height="1" fill="#999"/><path d="M6 6H13L15 8L16 10V15H2L3 11L5 8Z" fill="#151515"/><path d="M7.5 7H12.5L11 9.5L10.5 14H9.5L9 9.5Z" fill="#b0b0a8"/><path d="M4 12h2M14 12h1" stroke="#777" stroke-width="1"/><path d="M1 18.5h2M4 18.5h1M6 18.5h2M9 18.5h2M12 18.5h1M14 18.5h3M18 18.5h1" stroke="#222" stroke-width="1.4"/></svg><svg style="position:absolute;left:345px;top:55px" width="30" height="22" viewBox="0 0 30 22" shape-rendering="crispEdges"><rect x="7" y="8" width="14" height="8" fill="#000"/><rect x="8" y="9" width="12" height="6" fill="#ff6a10"/><path d="M9 10h2M9 10v2h2v2h-2M12 10h2v2h-2v2M15 10h2M15 10v2h2v2h-2" stroke="#a03000" stroke-width="1" fill="none"/><path d="M20 7H25L27 9V16H20Z" fill="#000"/><rect x="21" y="8" width="4" height="2" fill="#fff"/><rect x="21" y="10" width="5" height="5" fill="#10a010"/><rect x="23" y="11" width="1" height="3" fill="#064006"/><circle cx="11.5" cy="17" r="2.5" fill="#000" shape-rendering="auto"/><rect x="11" y="16" width="1.5" height="1.5" fill="#ccc"/><circle cx="23.5" cy="17" r="2.5" fill="#000" shape-rendering="auto"/><rect x="23" y="16" width="1.5" height="1.5" fill="#ccc"/></svg><svg style="position:absolute;left:462px;top:59px" width="18" height="19" viewBox="0 0 18 19" shape-rendering="crispEdges"><path d="M1 1H7L8 2H10L11 1H17V15H1Z" fill="#8090b8"/><path d="M2 2H7L8 3V14H2Z" fill="#f0f0f0"/><path d="M10 3L11 2H16V14H10Z" fill="#f0f0f0"/><rect x="8" y="3" width="2" height="13" fill="#2a3a9a"/><path d="M3 4h2M4 5h2M3 6h1M5 7h2M3 8h1M4 9h3M3 11h2M4 12h2M12 4h2M11 5h1M14 6h1M11 7h2M13 8h2M12 10h2M11 11h1M13 12h2" stroke="#000" stroke-width="1"/><path d="M0 14H18V16L13 17L12 18H6L5 17L0 16Z" fill="#e02000"/><path d="M1 14h1M3 14h1M5 14h1M7 14h1M11 14h1M13 14h1M15 14h1M2 15h1M4 15h1M6 15h1M8 15h2M10 15h1M12 15h1M14 15h1M16 15h1M7 16h1M9 16h1M11 16h1" stroke="#2a3aa0" stroke-width="1"/><path d="M1 15h1M3 15h1M5 15h1M13 15h1M15 15h1M6 16h1M8 16h1M10 16h1" stroke="#fff" stroke-width="1"/></svg><svg style="position:absolute;left:556px;top:56px" width="28" height="24" viewBox="0 0 28 24" shape-rendering="crispEdges"><path d="M6 4H22L24 6V15L23 16V21H13L12 20H6Z" fill="#fff" stroke="#0a6e0a" stroke-width="2" shape-rendering="auto"/><path d="M8 6H20V18H8Z" fill="#fff" stroke="#0a6e0a" stroke-width="1.5" shape-rendering="auto"/><path d="M11 8H19V16H11Z" fill="#dccbd0" stroke="#0a6e0a" stroke-width="1.8" shape-rendering="auto"/><path d="M8 6L19 16M8 18L11 16M20 6L19 8" stroke="#0a6e0a" stroke-width="1.5" shape-rendering="auto"/><path d="M12 12H15M15 9V12" stroke="#0a6e0a" stroke-width="1.5"/></svg><svg style="position:absolute;left:650px;top:55px" width="32" height="26" viewBox="0 0 32 26" shape-rendering="crispEdges"><rect x="9" y="3" width="21" height="2" fill="#f00"/><rect x="9" y="3" width="2" height="12" fill="#f00"/><rect x="28" y="3" width="2" height="9" fill="#f00"/><path d="M10 14.5L28 23" stroke="#f00" stroke-width="2.2" shape-rendering="auto"/><rect x="12" y="6" width="1" height="7" fill="#f00"/><rect x="16" y="6" width="1" height="7" fill="#f00"/><rect x="13" y="7" width="1" height="2" fill="#f00"/><rect x="15" y="7" width="1" height="2" fill="#f00"/><rect x="14" y="9" width="1" height="1" fill="#f00"/><path d="M20 6.5L22 9.5L20 12.5L18 9.5Z" fill="#c8c0c0" stroke="#f00" stroke-width="1" shape-rendering="auto"/><path d="M26 6.5H23.5V9.5H25.5V12.5H23" stroke="#f00" stroke-width="1" fill="none"/></svg>
<svg style="position:absolute;left:22px;top:717px" width="18" height="17" viewBox="0 0 18 17" shape-rendering="crispEdges"><rect x="1" y="1" width="1" height="15" fill="#000"/><path d="M1.5 8.5L14.5 2V15Z" fill="#0a14c0" stroke="#000" stroke-width="1.2" stroke-linejoin="bevel" shape-rendering="auto"/></svg><svg style="position:absolute;left:73px;top:717px" width="17" height="17" viewBox="0 0 17 17" shape-rendering="crispEdges"><path d="M1.5 8.5L14.5 2V15Z" fill="#0a14c0" stroke="#000" stroke-width="1.2" stroke-linejoin="bevel" shape-rendering="auto"/></svg><svg style="position:absolute;left:176px;top:717px" width="17" height="17" viewBox="0 0 17 17" shape-rendering="crispEdges"><path d="M15 8.5L2 2V15Z" fill="#0a14c0" stroke="#000" stroke-width="1.2" stroke-linejoin="bevel" shape-rendering="auto"/></svg><svg style="position:absolute;left:226px;top:717px" width="18" height="17" viewBox="0 0 18 17" shape-rendering="crispEdges"><rect x="16" y="1" width="1" height="15" fill="#000"/><path d="M15 8.5L2 2V15Z" fill="#0a14c0" stroke="#000" stroke-width="1.2" stroke-linejoin="bevel" shape-rendering="auto"/></svg><svg style="position:absolute;left:328px;top:718px" width="18" height="16" viewBox="0 0 18 16" shape-rendering="crispEdges"><rect x="2" y="1" width="14" height="14" fill="#b8b4a8"/><rect x="2" y="1" width="13" height="1" fill="#fff"/><rect x="2" y="1" width="1" height="13" fill="#fff"/><rect x="15" y="0" width="1" height="15" fill="#000060"/><rect x="2" y="14" width="14" height="1" fill="#000060"/><rect x="9" y="4" width="6" height="1" fill="#000"/><rect x="9" y="9" width="6" height="1" fill="#000"/><rect x="5" y="1" width="3" height="11" fill="#00a000"/><rect x="0" y="5" width="11" height="3" fill="#00a000"/><rect x="6" y="2" width="1" height="9" fill="#40ff40"/><rect x="1" y="6" width="9" height="1" fill="#40ff40"/></svg><svg style="position:absolute;left:379px;top:718px" width="18" height="16" viewBox="0 0 18 16" shape-rendering="crispEdges"><rect x="3" y="1" width="13" height="14" fill="#b8b4a8"/><rect x="3" y="1" width="12" height="1" fill="#fff"/><rect x="3" y="1" width="1" height="13" fill="#fff"/><rect x="15" y="0" width="1" height="15" fill="#000060"/><rect x="3" y="14" width="13" height="1" fill="#000060"/><rect x="9" y="4" width="6" height="1" fill="#000"/><rect x="9" y="9" width="6" height="1" fill="#000"/><path d="M1 3L10.5 11M9 3L1 10" stroke="#e00010" stroke-width="2.4" shape-rendering="auto"/></svg><svg style="position:absolute;left:425px;top:714px" width="30" height="24" viewBox="0 0 30 24" shape-rendering="crispEdges"><g fill="none" stroke="#7f7a7c" shape-rendering="auto"><path d="M6.5 9.5H13M5.5 11.5H13M4.5 13.5H13" stroke-width="1.3"/><path d="M17 10L21.5 8" stroke-width="1.4"/><path d="M14.5 15L9 16.5L8.5 18.5" stroke-width="1.8"/><path d="M16.5 15L17.5 17.5L20.5 19" stroke-width="1.8"/></g><rect x="15" y="5" width="2.6" height="2.6" fill="#7f7a7c"/><path d="M13.5 8H17.5L18 11L17.5 15.5H13.5L12.5 11Z" fill="#7f7a7c"/></svg><svg style="position:absolute;left:489px;top:717px" width="18" height="17" viewBox="0 0 18 17" shape-rendering="crispEdges"><rect x="1" y="1" width="1" height="15" fill="#000"/><path d="M1.5 8.5L14.5 2V15Z" fill="#0a14c0" stroke="#000" stroke-width="1.2" stroke-linejoin="bevel" shape-rendering="auto"/></svg><svg style="position:absolute;left:538px;top:717px" width="17" height="17" viewBox="0 0 17 17" shape-rendering="crispEdges"><path d="M1.5 8.5L14.5 2V15Z" fill="#0a14c0" stroke="#000" stroke-width="1.2" stroke-linejoin="bevel" shape-rendering="auto"/></svg><svg style="position:absolute;left:601px;top:717px" width="17" height="17" viewBox="0 0 17 17" shape-rendering="crispEdges"><path d="M15 8.5L2 2V15Z" fill="#0a14c0" stroke="#000" stroke-width="1.2" stroke-linejoin="bevel" shape-rendering="auto"/></svg><svg style="position:absolute;left:651px;top:717px" width="18" height="17" viewBox="0 0 18 17" shape-rendering="crispEdges"><rect x="16" y="1" width="1" height="15" fill="#000"/><path d="M15 8.5L2 2V15Z" fill="#0a14c0" stroke="#000" stroke-width="1.2" stroke-linejoin="bevel" shape-rendering="auto"/></svg><svg style="position:absolute;left:707px;top:718px" width="18" height="16" viewBox="0 0 18 16" shape-rendering="crispEdges"><rect x="2" y="1" width="14" height="14" fill="#b8b4a8"/><rect x="2" y="1" width="13" height="1" fill="#fff"/><rect x="2" y="1" width="1" height="13" fill="#fff"/><rect x="15" y="0" width="1" height="15" fill="#000060"/><rect x="2" y="14" width="14" height="1" fill="#000060"/><rect x="9" y="4" width="6" height="1" fill="#000"/><rect x="9" y="9" width="6" height="1" fill="#000"/><rect x="5" y="1" width="3" height="11" fill="#00a000"/><rect x="0" y="5" width="11" height="3" fill="#00a000"/><rect x="6" y="2" width="1" height="9" fill="#40ff40"/><rect x="1" y="6" width="9" height="1" fill="#40ff40"/></svg><svg style="position:absolute;left:757px;top:718px" width="18" height="16" viewBox="0 0 18 16" shape-rendering="crispEdges"><rect x="3" y="1" width="13" height="14" fill="#b8b4a8"/><rect x="3" y="1" width="12" height="1" fill="#fff"/><rect x="3" y="1" width="1" height="13" fill="#fff"/><rect x="15" y="0" width="1" height="15" fill="#000060"/><rect x="3" y="14" width="13" height="1" fill="#000060"/><rect x="9" y="4" width="6" height="1" fill="#000"/><rect x="9" y="9" width="6" height="1" fill="#000"/><path d="M1 3L10.5 11M9 3L1 10" stroke="#e00010" stroke-width="2.4" shape-rendering="auto"/></svg><svg style="position:absolute;left:804px;top:714px" width="30" height="24" viewBox="0 0 30 24" shape-rendering="crispEdges"><g fill="none" stroke="#7f7a7c" shape-rendering="auto"><path d="M6.5 9.5H13M5.5 11.5H13M4.5 13.5H13" stroke-width="1.3"/><path d="M17 10L21.5 8" stroke-width="1.4"/><path d="M14.5 15L9 16.5L8.5 18.5" stroke-width="1.8"/><path d="M16.5 15L17.5 17.5L20.5 19" stroke-width="1.8"/></g><rect x="15" y="5" width="2.6" height="2.6" fill="#7f7a7c"/><path d="M13.5 8H17.5L18 11L17.5 15.5H13.5L12.5 11Z" fill="#7f7a7c"/></svg></body></html>
